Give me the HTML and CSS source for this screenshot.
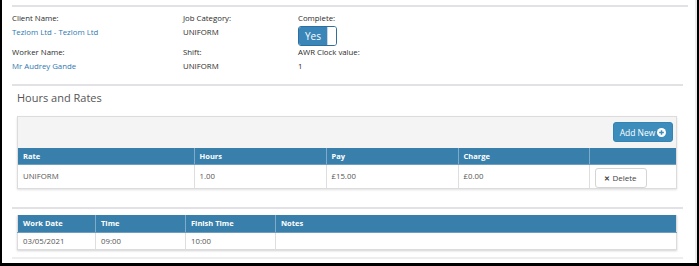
FILE: index.html
```html
<!DOCTYPE html>
<html lang="en">
  <head>
    <meta charset="UTF-8" />
    <title>Timesheet</title>
    <link rel="stylesheet" href="styles.css">
  </head>
  <body>
    <div class="frame">
      <hr class="rule" />

      <div class="info">
        <div class="label">Client Name:</div>
        <div class="label">Job Category:</div>
        <div class="label">Complete:</div>

        <div class="value"><a href="#">Tezlom Ltd - Tezlom Ltd</a></div>
        <div class="value">UNIFORM</div>
        <div class="value">
          <span class="toggle"><span class="toggle-on">Yes</span><span class="toggle-handle"></span></span>
        </div>

        <div class="label">Worker Name:</div>
        <div class="label">Shift:</div>
        <div class="label">AWR Clock value:</div>

        <div class="value"><a href="#">Mr Audrey Gande</a></div>
        <div class="value">UNIFORM</div>
        <div class="value">1</div>
      </div>

      <div class="section">
        <hr class="rule rule-top" />
        <h3 class="section-title">Hours and Rates</h3>

        <div class="panel">
          <div class="panel-head">
            <button class="btn-add">Add New
              <svg width="9" height="9" viewBox="0 0 10 10">
                <circle cx="5" cy="5" r="5" fill="#fff" />
                <path d="M5 2.4v5.2M2.4 5h5.2" stroke="#3c8dbc" stroke-width="1.6" />
              </svg>
            </button>
          </div>
          <table class="grid">
            <thead>
              <tr>
                <th class="c-rate">Rate</th>
                <th class="c-num">Hours</th>
                <th class="c-num">Pay</th>
                <th class="c-charge">Charge</th>
                <th></th>
              </tr>
            </thead>
            <tbody>
              <tr>
                <td>UNIFORM</td>
                <td>1.00</td>
                <td>£15.00</td>
                <td>£0.00</td>
                <td class="c-action"><button class="btn-delete"><b>✕</b> Delete</button></td>
              </tr>
            </tbody>
          </table>
        </div>

        <hr class="rule rule-mid" />

        <table class="grid grid-work">
          <thead>
            <tr>
              <th class="c-date">Work Date</th>
              <th class="c-time">Time</th>
              <th class="c-time">Finish Time</th>
              <th>Notes</th>
            </tr>
          </thead>
          <tbody>
            <tr>
              <td>03/05/2021</td>
              <td>09:00</td>
              <td>10:00</td>
              <td></td>
            </tr>
          </tbody>
        </table>

        <hr class="rule rule-end" />
      </div>
    </div>
  </body>
</html>
```

FILE: styles.css
```css
body {
  margin: 0;
  font-family: "Open Sans", "Liberation Sans", sans-serif;
  font-size: 7.8px;
  color: #2b2b2b;
  background: #fff;
}

.frame {
  width: 699px;
  height: 266px;
  box-sizing: border-box;
  border-left: 2px solid #000;
  border-right: 2px solid #000;
  border-bottom: 3px solid #000;
  box-shadow: inset -2px 0 0 #ebebeb;
  padding: 0 9px 0 10px;
  overflow: hidden;
}

.rule {
  margin: 5px 0 0;
  border: 0;
  border-top: 2px solid #e2e2e6;
  height: 0;
}

.info {
  display: grid;
  grid-template-columns: 171px 115px 1fr;
  grid-template-rows: 14px 20px 14px 14px;
  margin-top: 4px;
  line-height: 14px;
}

.value {
  line-height: 12px;
  padding-top: 1px;
}

.value a {
  color: #2f78b0;
  text-decoration: none;
}

.toggle {
  display: inline-flex;
  height: 18px;
  border: 1px solid #2f6fa0;
  border-radius: 3px;
  overflow: hidden;
}

.toggle-on {
  width: 28px;
  background: #3a86b8;
  color: #fff;
  font-size: 10px;
  line-height: 18px;
  text-align: center;
}

.toggle-handle {
  width: 8px;
  background: #fff;
  border-left: 1px solid #c9d6e0;
}

.section {
  margin-right: 5px;
}

.rule-top {
  margin-top: 11px;
}

.section-title {
  margin: 4px 0 0 5px;
  font-size: 11px;
  line-height: 16px;
  font-weight: normal;
  color: #555;
}

.panel {
  margin: 10px 6px 0 5px;
  border: 1px solid #dcdcdc;
  box-shadow: 0 1px 2px rgba(0, 0, 0, 0.12);
}

.panel-head {
  display: flex;
  justify-content: flex-end;
  background: #f4f4f4;
  padding: 5px 3px 6px;
}

.btn-add {
  display: flex;
  align-items: center;
  gap: 2px;
  height: 20px;
  width: 60px;
  justify-content: center;
  border: 1px solid #3583b4;
  border-radius: 3px;
  background: #3c8dbc;
  color: #fff;
  font-family: inherit;
  font-size: 8.5px;
  padding: 0;
}

.grid {
  width: 100%;
  border-collapse: collapse;
  table-layout: fixed;
}

.grid th {
  box-sizing: border-box;
  background: #387fab;
  color: #fff;
  font-weight: 700;
  font-size: 7.5px;
  text-align: left;
  height: 16px;
  padding: 0 5px;
  border-left: 1px solid #7eaacb;
  border-bottom: 1px solid #6d9fc2;
}

.grid th:first-child,
.grid td:first-child {
  border-left: 0;
}

.grid td {
  box-sizing: border-box;
  height: 24px;
  padding: 0 5px;
  color: #555;
  border-left: 1px solid #dedede;
}

.c-rate {
  width: 176px;
}

.c-num {
  width: 132px;
}

.c-charge {
  width: 131px;
}

.grid .c-action {
  padding: 3px 0 0 5px;
  vertical-align: top;
}

.btn-delete {
  display: block;
  width: 52px;
  height: 20px;
  padding: 0;
  border: 1px solid #d4d4d4;
  border-radius: 3px;
  background: #fff;
  color: #444;
  font-family: inherit;
  font-size: 8px;
}

.btn-delete b {
  font-size: 7px;
}

.rule-mid {
  margin-top: 18px;
}

.grid-work {
  width: 660px;
  margin: 6px 0 0 5px;
  box-shadow: 0 1px 2px rgba(0, 0, 0, 0.18);
  border: 1px solid #dcdcdc;
  border-top: 0;
}

.grid-work th {
  height: 17px;
}

.grid-work td {
  height: 17px;
}

.c-date {
  width: 78px;
}

.c-time {
  width: 90px;
}

.rule-end {
  margin-top: 7px;
  border-top-color: #eeeeee;
}
```
